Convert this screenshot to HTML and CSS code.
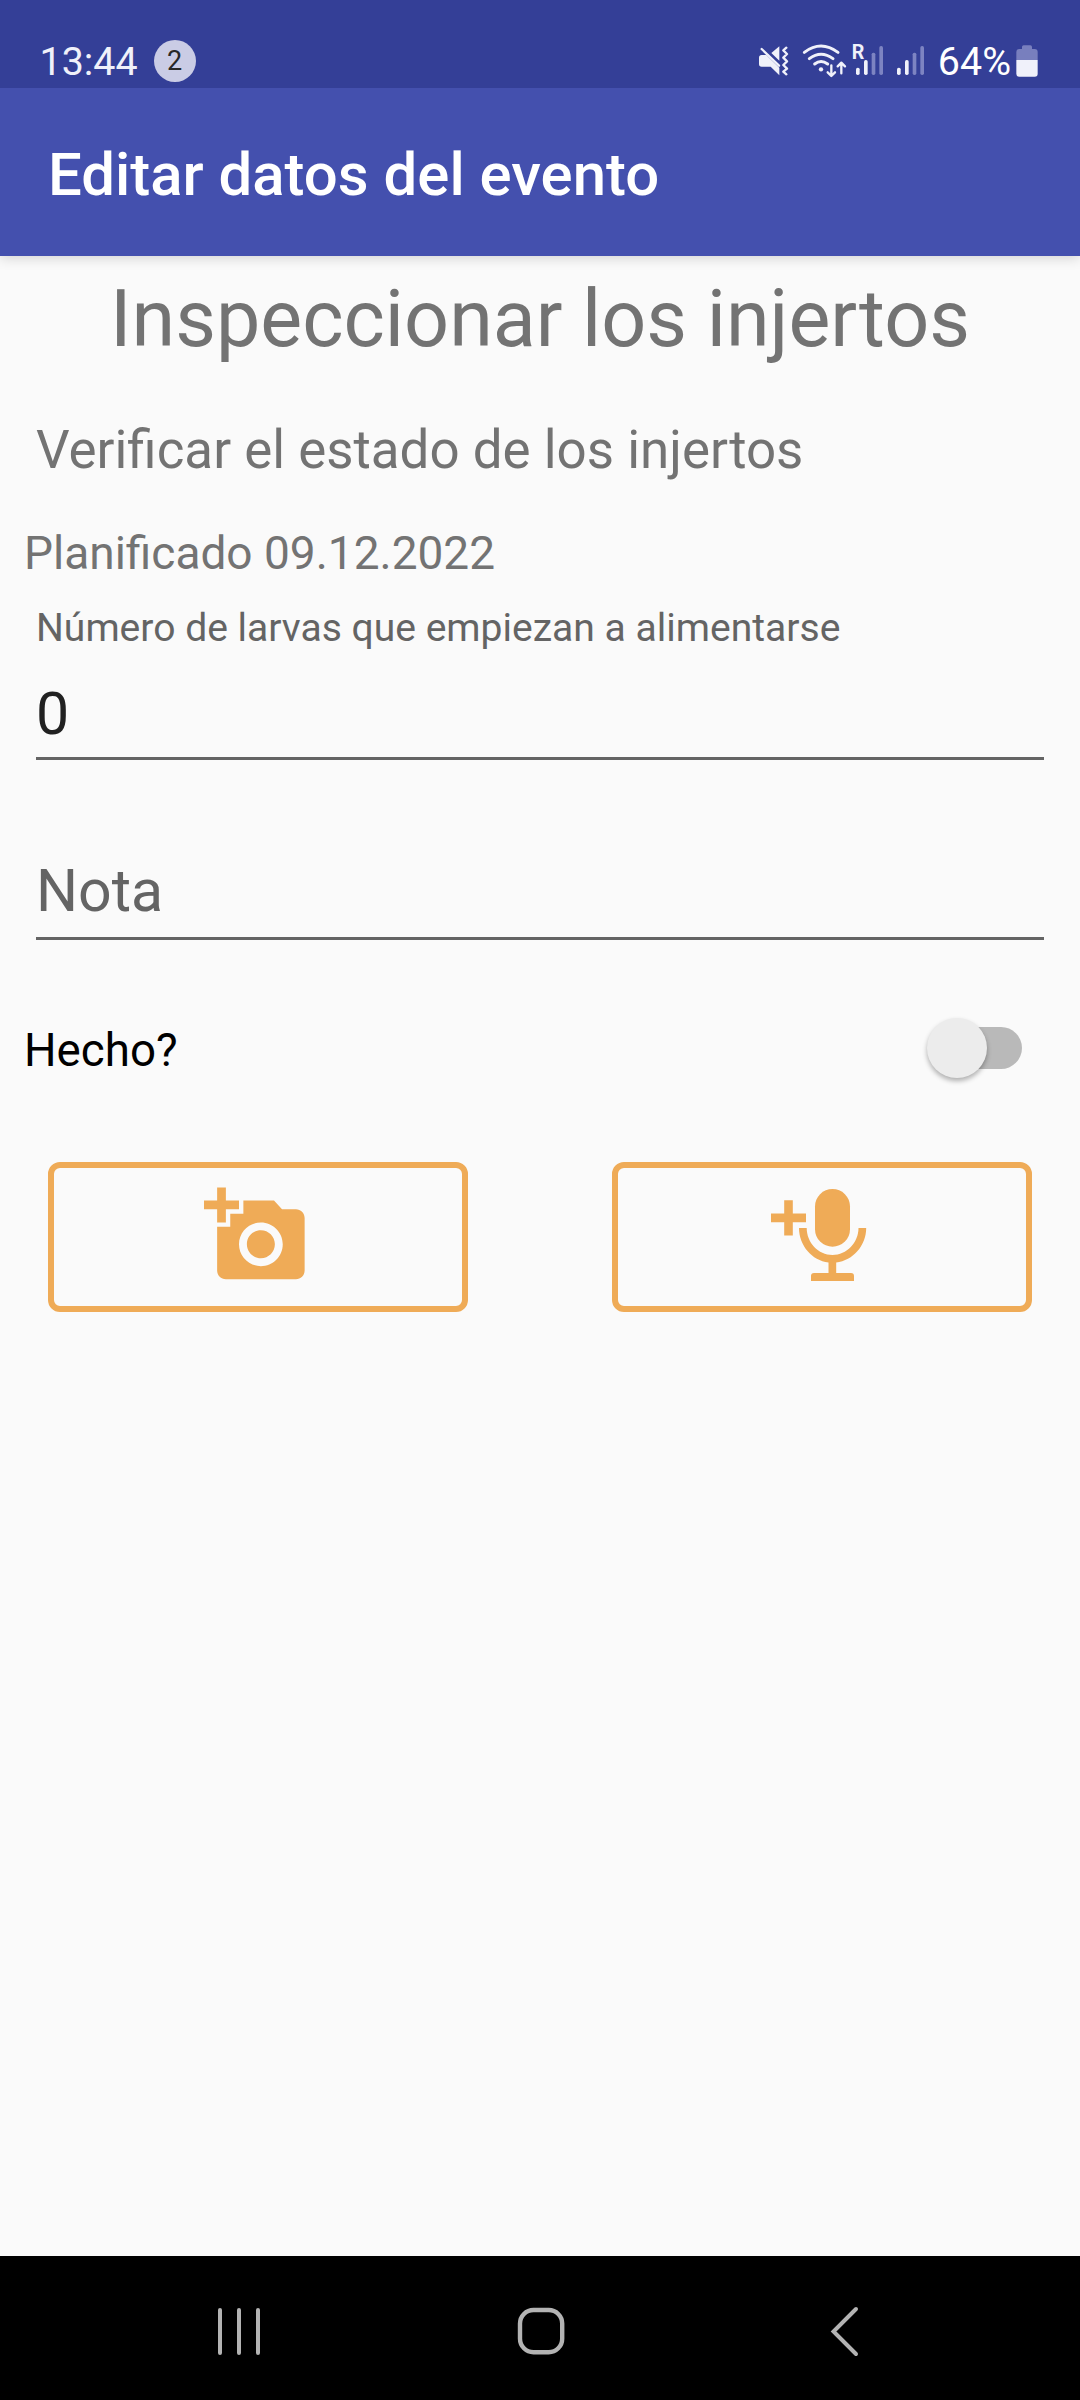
FILE: index.html
```html
<!DOCTYPE html>
<html lang="es">
<head>
    <meta charset="UTF-8">
    <meta name="viewport" content="width=device-width, initial-scale=1.0">
    <title>Editar datos del evento</title>
    <link rel="stylesheet" href="styles.css">
</head>
<body>
    <div class="status-bar">
        <span class="clock">13:44</span>
        <span class="badge">2</span>
        <div class="status-icons">
            <!-- mute + wifi -->
            <svg width="96" height="50" viewBox="0 0 288 150">
                <path fill="#f0f1fa" d="M29 57h14l39 38v23L56 92H29q-8 0-8-8V65q0-8 8-8zM58 51l24-20v43z"/>
                <path fill="none" stroke="#f0f1fa" stroke-width="7" stroke-linecap="round" stroke-linejoin="round" d="M29 39l52 50M103 35l-9 8 11 11-11 11 11 11-11 11 11 11-11 9 9 8"/>
                <g fill="none" stroke="#f0f1fa" stroke-width="9" stroke-linecap="round">
                    <path d="M157 49q50-38 101 0M172 68q35-27 71 0M188 84q19-15 39 0"/>
                    <path stroke-width="7" stroke-linejoin="round" d="M238 88v31M227 109l11 11 11-11M268 112V82M257 91l11-11 11 11"/>
                </g>
                <circle cx="207" cy="100" r="6.5" fill="#f0f1fa"/>
            </svg>
            <!-- señal -->
            <svg width="84" height="50" viewBox="0 0 252 150">
                <text class="roaming" x="11" y="70">R</text>
                <g fill="#f0f1fa">
                    <rect x="24" y="95" width="11" height="22" rx="5"/>
                    <rect x="48" y="72" width="11" height="45" rx="5"/>
                    <rect x="147" y="95" width="11" height="22" rx="5"/>
                    <rect x="171" y="72" width="11" height="45" rx="5"/>
                </g>
                <g fill="#7d84c2">
                    <rect x="71" y="50" width="11" height="67" rx="5"/>
                    <rect x="94" y="30" width="11" height="87" rx="5"/>
                    <rect x="194" y="50" width="11" height="67" rx="5"/>
                    <rect x="217" y="30" width="11" height="87" rx="5"/>
                </g>
            </svg>
            <span class="percent">64%</span>
            <!-- batería -->
            <svg width="22" height="50" viewBox="50 0 66 150">
                <path fill="#787fbe" d="M51 72V48q0-9 9-9h8v-6q0-5 5-5h20q5 0 5 5v6h8q9 0 9 9v24z"/>
                <path fill="#f0f1fa" d="M51 72h64v41q0 9-9 9H60q-9 0-9-9z"/>
            </svg>
        </div>
    </div>

    <header class="app-bar">
        <h1>Editar datos del evento</h1>
    </header>

    <main>
        <h2>Inspeccionar los injertos</h2>
        <p class="description">Verificar el estado de los injertos</p>
        <p class="planned">Planificado 09.12.2022</p>

        <div class="field">
            <label class="field-label">Número de larvas que empiezan a alimentarse</label>
            <div class="field-input">0</div>
        </div>
        <div class="field note">
            <div class="field-input placeholder">Nota</div>
        </div>

        <div class="done-row">
            <span class="done-label">Hecho?</span>
            <div class="switch"><div class="thumb"></div></div>
        </div>

        <div class="buttons">
            <div class="media-button">
                <svg width="105" height="105" viewBox="0 0 24 24" fill="#efab57">
                    <path d="M3 4V1h2v3h3v2H5v3H3V6H0V4h3zm3 6V7h3V4h7l1.83 2H21c1.1 0 2 .9 2 2v12c0 1.1-.9 2-2 2H5c-1.1 0-2-.9-2-2V10h3zm7 9c2.76 0 5-2.24 5-5s-2.24-5-5-5-5 2.24-5 5 2.24 5 5 5zm-3.2-5c0 1.77 1.43 3.2 3.2 3.2s3.2-1.43 3.2-3.2-1.43-3.2-3.2-3.2-3.2 1.43-3.2 3.2z"/>
                </svg>
            </div>
            <div class="media-button">
                <svg width="105" height="105" viewBox="0 0 105 105" fill="#efab57">
                    <path d="M16.2 17.3h8.6v13.2H38v8.7H24.8v13.3h-8.6V39.2H3v-8.7h13.2z"/>
                    <rect x="47" y="6" width="35" height="57.7" rx="17.5"/>
                    <path d="M31 45h7.7c0 14.5 11.6 27 25.8 27s26-12.5 26-27h7.7c0 17.5-13 32.5-30 34.5V90H83q3 0 3 3v5H43v-5q0-3 3-3h14.5V79.5C44 77.5 31 62.5 31 45z"/>
                </svg>
            </div>
        </div>
    </main>

    <nav class="nav-bar">
        <svg width="48" height="56" viewBox="0 0 48 56" stroke="#b3b3b3" stroke-width="4" stroke-linecap="round">
            <path d="M5 7v43M24 7v43M43 7v43"/>
        </svg>
        <svg width="56" height="56" viewBox="0 0 56 56" fill="none" stroke="#b3b3b3" stroke-width="4.4">
            <rect x="8" y="7" width="42.2" height="42.2" rx="13.5"/>
        </svg>
        <svg width="48" height="56" viewBox="0 0 48 56" fill="none" stroke="#b3b3b3" stroke-width="4" stroke-linecap="round">
            <path d="M39 6L16.5 28.5 39 51"/>
        </svg>
    </nav>
</body>
</html>
```
FILE: styles.css
```css
* {
    box-sizing: border-box;
    margin: 0;
    padding: 0;
}
body {
    font-family: Roboto, sans-serif;
    background: #fafafa;
    height: 2400px;
    display: flex;
    flex-direction: column;
}
svg {
    display: block;
    flex: none;
}
.status-bar {
    position: relative;
    z-index: 1;
    height: 88px;
    padding: 34px 42px 0 39.5px;
    background: #343f97;
    display: flex;
    align-items: center;
    font-size: 39.4px;
    color: #f0f1fa;
}
.badge {
    width: 42px;
    height: 42px;
    margin-left: 16px;
    border-radius: 50%;
    background: #cacce5;
    color: #282828;
    font-size: 27px;
    line-height: 43px;
    text-align: center;
}
.status-icons {
    margin-left: auto;
    display: flex;
    align-items: center;
}
.roaming {
    font-size: 59px;
    font-weight: 700;
    fill: #f0f1fa;
}
.percent {
    margin: 0 5px 0 6px;
    color: #fff;
}
.app-bar {
    height: 168px;
    padding: 5px 48px 0;
    background: #4450ae;
    box-shadow: 0 2px 12px rgba(0, 0, 0, 0.16);
    display: flex;
    align-items: center;
}
.app-bar h1 {
    color: #fff;
    font-size: 59.9px;
    font-weight: 500;
}
main {
    flex: 1;
    padding-top: 17px;
    color: #737373;
}
h2 {
    font-size: 79px;
    font-weight: 400;
    line-height: 92px;
    text-align: center;
}
.description {
    margin: 54px 36px 0;
    font-size: 52.9px;
    line-height: 62px;
}
.planned {
    margin: 45px 24px 0;
    font-size: 46px;
    line-height: 54px;
}
.field {
    margin: 26px 36px 0;
    color: #646464;
}
.field-label {
    display: block;
    font-size: 39.05px;
    line-height: 44px;
}
.field-input {
    margin-top: 29px;
    padding-bottom: 8px;
    border-bottom: 3px solid #646464;
    color: #212121;
    font-size: 59px;
    line-height: 70px;
}
.field.note {
    margin-top: 96px;
}
.field-input.placeholder {
    margin-top: 0;
    padding-bottom: 11px;
    color: #646464;
}
.done-row {
    margin: 80px 58px 0 24px;
    height: 60px;
    display: flex;
    align-items: center;
    justify-content: space-between;
}
.done-label {
    padding-top: 2px;
    color: #000;
    font-size: 45.7px;
    line-height: 54px;
}
.switch {
    width: 90px;
    height: 42px;
    margin-bottom: 4px;
    border-radius: 21px;
    background: #b9b9b9;
    display: flex;
    align-items: center;
}
.thumb {
    width: 60px;
    height: 60px;
    margin-left: -5.5px;
    border-radius: 50%;
    background: #ececec;
    box-shadow: 0 3px 5px rgba(0, 0, 0, 0.3);
}
.buttons {
    margin: 82px 48px 0;
    display: flex;
    justify-content: space-between;
}
.media-button {
    width: 420px;
    height: 150px;
    padding: 0 3px 3px 0;
    border: 6px solid #efab57;
    border-radius: 12px;
    display: flex;
    align-items: center;
    justify-content: center;
}
.nav-bar {
    height: 144px;
    padding: 5px 215px 0;
    background: #000;
    display: flex;
    align-items: center;
    justify-content: space-between;
}
```
